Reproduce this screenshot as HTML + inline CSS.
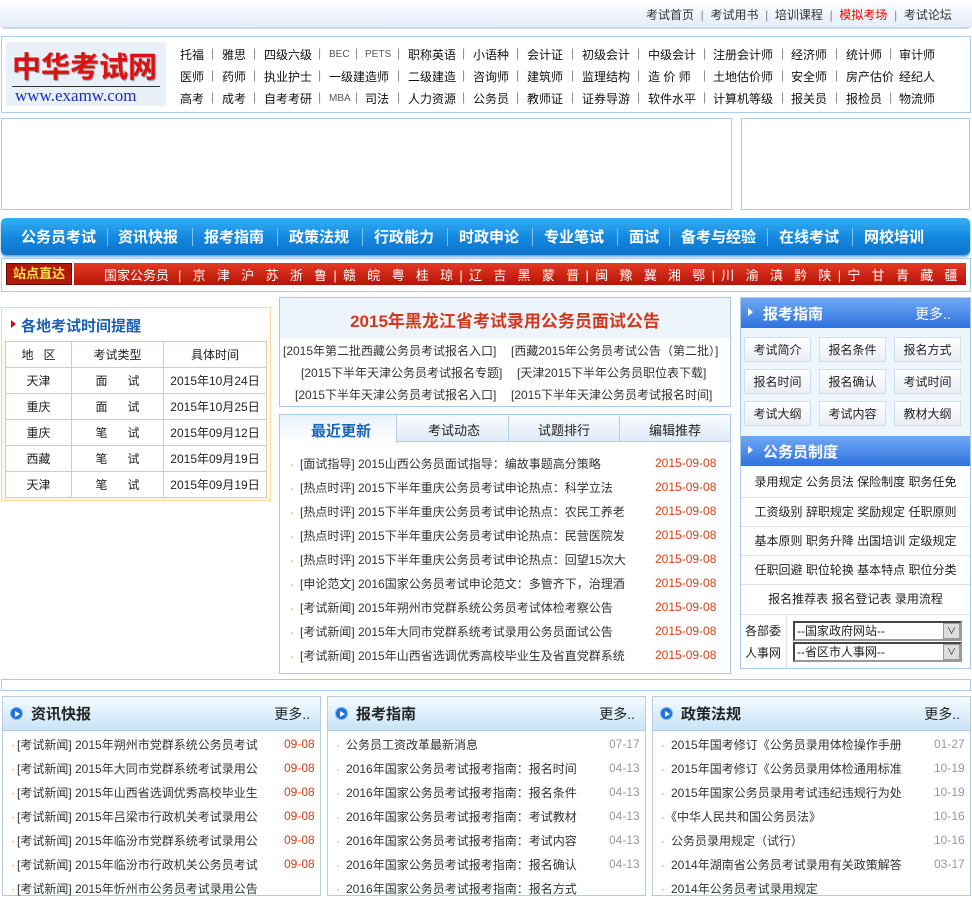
<!DOCTYPE html>
<html><head><meta charset="utf-8">
<style>
*{margin:0;padding:0;box-sizing:border-box}
body{width:972px;height:884px;overflow:hidden;background:#fff;font-family:"Liberation Sans","Noto Sans CJK SC","WenQuanYi Zen Hei",sans-serif;font-size:12px;color:#222;position:relative}
.a{position:absolute;white-space:nowrap}
.sep{color:#888}
.top{left:0;top:0;width:972px;height:29px;background:linear-gradient(#fff,#e4edfb);border-bottom:2px solid #c9d8ef;border-radius:0 0 6px 6px}
.box{position:absolute;border:1px solid #a9cbef}
.hl{font-size:12px;color:#111}
.nav{left:1px;top:218px;width:969px;height:37px;border-radius:5px;background:linear-gradient(#33b0f6,#1386de 55%,#0f74cc);box-shadow:0 2px 2px #6aa3d6}
.nav span{position:absolute;top:8px;color:#fff;font-size:15px;font-weight:bold}
.nav i{position:absolute;top:10px;width:1px;height:18px;background:#7cc6f5}
.red{left:74px;top:263px;width:892px;height:22px;background:linear-gradient(#e33a22,#b8130a)}
.red span{position:absolute;top:2px;color:#fff;font-size:13px}
.tb{border-collapse:collapse;position:absolute;left:5px;top:341px;width:262px}
.tb td{border:1px solid #ccc;height:26px;text-align:center;font-size:12px}
.li{position:absolute;font-size:12px;color:#333;white-space:nowrap}
.dot{color:#f08a00;margin-right:6px}
.dt{position:absolute;color:#d2401a;font-size:12px}
.gr{position:absolute;color:#999;font-size:12px}
.btn{position:absolute;width:67px;height:25px;background:linear-gradient(#fff,#e9eef5);border:1px solid #d4dde8;text-align:center;line-height:24px;font-size:12px;color:#222}
.rhd{position:absolute;height:30px;background:linear-gradient(#6fa8f3,#2f72e0);color:#fff;font-weight:bold;font-size:15px}
.bh{position:absolute;top:697px;height:34px;background:linear-gradient(#f5fbff,#c9e3f6);border-bottom:1px solid #b7cbe0}
.bh b{position:absolute;left:28px;top:6px;font-size:15px}
.bh em{position:absolute;right:10px;top:7px;font-style:normal;font-size:14px}
.ci{position:absolute;left:7px;top:10px;width:13px;height:13px;border-radius:50%;background:#1d73d6;border:1px solid #7fb6ef}
.ci:after{content:"";position:absolute;left:4px;top:3px;border-left:5px solid #fff;border-top:3px solid transparent;border-bottom:3px solid transparent}
.cell{position:absolute;left:741px;width:229px;height:29px;border-top:1px solid #d8e2ee;text-align:center;line-height:28px;font-size:12px}
.sm{font-size:10px!important;color:#555;line-height:17px}
</style></head><body>
<div class="a top"></div>
<div class="a" style="left:646px;top:6px;font-size:12px;color:#333">考试首页 &nbsp;<span class="sep">|</span>&nbsp; 考试用书 &nbsp;<span class="sep">|</span>&nbsp; 培训课程 &nbsp;<span class="sep">|</span>&nbsp; <span style="color:#e00">模拟考场</span> &nbsp;<span class="sep">|</span>&nbsp; 考试论坛</div>

<div class="box" style="left:1px;top:36px;width:970px;height:77px"></div>
<div class="a" style="left:6px;top:42px;width:160px;height:64px;background:#e9f0f8"></div>
<div class="a" style="left:12px;top:44px;font-size:29px;font-weight:bold;color:#d11;font-family:'Noto Sans CJK SC',sans-serif;text-shadow:1px 1px 1px #888">中华考试网</div>
<div class="a" style="left:12px;top:86px;width:148px;height:1px;background:#333"></div>
<div class="a" style="left:15px;top:86px;font-size:17px;color:#1c2fb8;font-family:'Liberation Serif',serif">www.examw.com</div>

<div class="hl">
<span class="a" style="left:180px;top:46px">托福</span><span class="a sep" style="left:211px;top:46px">|</span>
<span class="a" style="left:222px;top:46px">雅思</span><span class="a sep" style="left:253px;top:46px">|</span>
<span class="a" style="left:264px;top:46px">四级六级</span><span class="a sep" style="left:318px;top:46px">|</span>
<span class="a sm" style="left:329px;top:46px">BEC</span><span class="a sep" style="left:355px;top:46px">|</span>
<span class="a sm" style="left:365px;top:46px">PETS</span><span class="a sep" style="left:397px;top:46px">|</span>
<span class="a" style="left:408px;top:46px">职称英语</span><span class="a sep" style="left:462px;top:46px">|</span>
<span class="a" style="left:473px;top:46px">小语种</span><span class="a sep" style="left:516px;top:46px">|</span>
<span class="a" style="left:527px;top:46px">会计证</span><span class="a sep" style="left:571px;top:46px">|</span>
<span class="a" style="left:582px;top:46px">初级会计</span><span class="a sep" style="left:637px;top:46px">|</span>
<span class="a" style="left:648px;top:46px">中级会计</span><span class="a sep" style="left:703px;top:46px">|</span>
<span class="a" style="left:713px;top:46px">注册会计师</span><span class="a sep" style="left:781px;top:46px">|</span>
<span class="a" style="left:791px;top:46px">经济师</span><span class="a sep" style="left:835px;top:46px">|</span>
<span class="a" style="left:846px;top:46px">统计师</span><span class="a sep" style="left:889px;top:46px">|</span>
<span class="a" style="left:899px;top:46px">审计师</span>

<span class="a" style="left:180px;top:68px">医师</span><span class="a sep" style="left:211px;top:68px">|</span>
<span class="a" style="left:222px;top:68px">药师</span><span class="a sep" style="left:253px;top:68px">|</span>
<span class="a" style="left:264px;top:68px">执业护士</span><span class="a sep" style="left:318px;top:68px">|</span>
<span class="a" style="left:329px;top:68px">一级建造师</span><span class="a sep" style="left:397px;top:68px">|</span>
<span class="a" style="left:408px;top:68px">二级建造</span><span class="a sep" style="left:462px;top:68px">|</span>
<span class="a" style="left:473px;top:68px">咨询师</span><span class="a sep" style="left:516px;top:68px">|</span>
<span class="a" style="left:527px;top:68px">建筑师</span><span class="a sep" style="left:571px;top:68px">|</span>
<span class="a" style="left:582px;top:68px">监理结构</span><span class="a sep" style="left:637px;top:68px">|</span>
<span class="a" style="left:648px;top:68px">造&nbsp;价&nbsp;师</span><span class="a sep" style="left:703px;top:68px">|</span>
<span class="a" style="left:713px;top:68px">土地估价师</span><span class="a sep" style="left:781px;top:68px">|</span>
<span class="a" style="left:791px;top:68px">安全师</span><span class="a sep" style="left:835px;top:68px">|</span>
<span class="a" style="left:846px;top:68px">房产估价</span>
<span class="a" style="left:899px;top:68px">经纪人</span>

<span class="a" style="left:180px;top:90px">高考</span><span class="a sep" style="left:211px;top:90px">|</span>
<span class="a" style="left:222px;top:90px">成考</span><span class="a sep" style="left:253px;top:90px">|</span>
<span class="a" style="left:264px;top:90px">自考考研</span><span class="a sep" style="left:318px;top:90px">|</span>
<span class="a sm" style="left:329px;top:90px">MBA</span><span class="a sep" style="left:355px;top:90px">|</span>
<span class="a" style="left:365px;top:90px">司法</span><span class="a sep" style="left:397px;top:90px">|</span>
<span class="a" style="left:408px;top:90px">人力资源</span><span class="a sep" style="left:462px;top:90px">|</span>
<span class="a" style="left:473px;top:90px">公务员</span><span class="a sep" style="left:516px;top:90px">|</span>
<span class="a" style="left:527px;top:90px">教师证</span><span class="a sep" style="left:571px;top:90px">|</span>
<span class="a" style="left:582px;top:90px">证券导游</span><span class="a sep" style="left:637px;top:90px">|</span>
<span class="a" style="left:648px;top:90px">软件水平</span><span class="a sep" style="left:703px;top:90px">|</span>
<span class="a" style="left:713px;top:90px">计算机等级</span><span class="a sep" style="left:781px;top:90px">|</span>
<span class="a" style="left:791px;top:90px">报关员</span><span class="a sep" style="left:835px;top:90px">|</span>
<span class="a" style="left:846px;top:90px">报检员</span><span class="a sep" style="left:889px;top:90px">|</span>
<span class="a" style="left:899px;top:90px">物流师</span>
</div>

<div class="box" style="left:1px;top:118px;width:731px;height:92px"></div>
<div class="box" style="left:741px;top:118px;width:229px;height:92px"></div>

<div class="a nav">
<span style="left:20px">公务员考试</span><i style="left:106px"></i>
<span style="left:117px">资讯快报</span><i style="left:191px"></i>
<span style="left:203px">报考指南</span><i style="left:276px"></i>
<span style="left:288px">政策法规</span><i style="left:361px"></i>
<span style="left:373px">行政能力</span><i style="left:446px"></i>
<span style="left:458px">时政申论</span><i style="left:531px"></i>
<span style="left:543px">专业笔试</span><i style="left:616px"></i>
<span style="left:628px">面试</span><i style="left:668px"></i>
<span style="left:680px">备考与经验</span><i style="left:766px"></i>
<span style="left:778px">在线考试</span><i style="left:851px"></i>
<span style="left:863px">网校培训</span>
</div>

<div class="box" style="left:1px;top:258px;width:970px;height:34px"></div>
<div class="a" style="left:6px;top:263px;width:66px;height:22px;background:#b3180d;border:1px solid #6a0b05;color:#ffe04a;font-weight:bold;font-size:13px;text-align:center;line-height:20px">站点直达</div>
<div class="a red">
<span style="left:30px">国家公务员</span>
<span style="left:104px;letter-spacing:1.35px">|&nbsp; 京&nbsp; 津&nbsp; 沪&nbsp; 苏&nbsp; 浙&nbsp; 鲁&nbsp;|&nbsp;赣&nbsp; 皖&nbsp; 粤&nbsp; 桂&nbsp; 琼&nbsp;|&nbsp;辽&nbsp; 吉&nbsp; 黑&nbsp; 蒙&nbsp; 晋&nbsp;|&nbsp;闽&nbsp; 豫&nbsp; 冀&nbsp; 湘&nbsp; 鄂&nbsp;|&nbsp;川&nbsp; 渝&nbsp; 滇&nbsp; 黔&nbsp; 陕&nbsp;|&nbsp;宁&nbsp; 甘&nbsp; 青&nbsp; 藏&nbsp; 疆</span>
</div>

<!-- left -->
<div class="a" style="left:1px;top:307px;width:270px;height:194px;border:1px solid #f5d89a;background:#fff8e6"></div>
<div class="a" style="left:2px;top:308px;width:268px;height:32px;background:#fff"></div>
<div class="a" style="left:11px;top:320px;border-left:5px solid #c11;border-top:4px solid transparent;border-bottom:4px solid transparent"></div>
<div class="a" style="left:21px;top:315px;font-size:15px;font-weight:bold;color:#1b5fb6">各地考试时间提醒</div>
<table class="tb" style="background:#fff">
<tr><td style="width:66px">地&nbsp;&nbsp;&nbsp;区</td><td style="width:92px">考试类型</td><td>具体时间</td></tr>
<tr><td>天津</td><td>面&nbsp;&nbsp;&nbsp;&nbsp;&nbsp;&nbsp;试</td><td>2015年10月24日</td></tr>
<tr><td>重庆</td><td>面&nbsp;&nbsp;&nbsp;&nbsp;&nbsp;&nbsp;试</td><td>2015年10月25日</td></tr>
<tr><td>重庆</td><td>笔&nbsp;&nbsp;&nbsp;&nbsp;&nbsp;&nbsp;试</td><td>2015年09月12日</td></tr>
<tr><td>西藏</td><td>笔&nbsp;&nbsp;&nbsp;&nbsp;&nbsp;&nbsp;试</td><td>2015年09月19日</td></tr>
<tr><td>天津</td><td>笔&nbsp;&nbsp;&nbsp;&nbsp;&nbsp;&nbsp;试</td><td>2015年09月19日</td></tr>
</table>

<!-- center -->
<div class="box" style="left:279px;top:297px;width:452px;height:110px"></div>
<div class="a" style="left:280px;top:298px;width:450px;height:40px;background:#eef4fc"></div>
<div class="a" style="left:279px;top:307px;width:452px;text-align:center;font-size:17px;font-weight:bold;color:#d3381c">2015年黑龙江省考试录用公务员面试公告</div>
<div class="a" style="left:283px;top:342px;color:#333">[2015年第二批西藏公务员考试报名入口]</div>
<div class="a" style="left:511px;top:342px;color:#333">[西藏2015年公务员考试公告（第二批）]</div>
<div class="a" style="left:301px;top:364px;color:#333">[2015下半年天津公务员考试报名专题]</div>
<div class="a" style="left:517px;top:364px;color:#333">[天津2015下半年公务员职位表下载]</div>
<div class="a" style="left:295px;top:386px;color:#333">[2015下半年天津公务员考试报名入口]</div>
<div class="a" style="left:511px;top:386px;color:#333">[2015下半年天津公务员考试报名时间]</div>

<div class="box" style="left:279px;top:414px;width:452px;height:260px"></div>
<div class="a" style="left:280px;top:415px;width:450px;height:27px;background:linear-gradient(#fafcff,#dfeaf7);border-bottom:1px solid #b9cfe8"></div>
<div class="a" style="left:280px;top:415px;width:117px;height:28px;background:linear-gradient(#e8f1fb,#fff);border-right:1px solid #b9cfe8"></div>
<div class="a" style="left:311px;top:420px;font-size:15px;font-weight:bold;color:#1b64b8">最近更新</div>
<div class="a" style="left:508px;top:416px;width:1px;height:26px;background:#b9cfe8"></div>
<div class="a" style="left:619px;top:416px;width:1px;height:26px;background:#b9cfe8"></div>
<div class="a" style="left:428px;top:420px;font-size:13px">考试动态</div>
<div class="a" style="left:538px;top:420px;font-size:13px">试题排行</div>
<div class="a" style="left:649px;top:420px;font-size:13px">编辑推荐</div>

<div class="li" style="left:290px;top:455px"><span class="dot">·</span>[面试指导] 2015山西公务员面试指导：编故事题高分策略</div>
<div class="li" style="left:290px;top:479px"><span class="dot">·</span>[热点时评] 2015下半年重庆公务员考试申论热点：科学立法</div>
<div class="li" style="left:290px;top:503px"><span class="dot">·</span>[热点时评] 2015下半年重庆公务员考试申论热点：农民工养老</div>
<div class="li" style="left:290px;top:527px"><span class="dot">·</span>[热点时评] 2015下半年重庆公务员考试申论热点：民营医院发</div>
<div class="li" style="left:290px;top:551px"><span class="dot">·</span>[热点时评] 2015下半年重庆公务员考试申论热点：回望15次大</div>
<div class="li" style="left:290px;top:575px"><span class="dot">·</span>[申论范文] 2016国家公务员考试申论范文：多管齐下，治理酒</div>
<div class="li" style="left:290px;top:599px"><span class="dot">·</span>[考试新闻] 2015年朔州市党群系统公务员考试体检考察公告</div>
<div class="li" style="left:290px;top:623px"><span class="dot">·</span>[考试新闻] 2015年大同市党群系统考试录用公务员面试公告</div>
<div class="li" style="left:290px;top:647px"><span class="dot">·</span>[考试新闻] 2015年山西省选调优秀高校毕业生及省直党群系统</div>
<div class="dt" style="left:655px;top:456px">2015-09-08</div>
<div class="dt" style="left:655px;top:480px">2015-09-08</div>
<div class="dt" style="left:655px;top:504px">2015-09-08</div>
<div class="dt" style="left:655px;top:528px">2015-09-08</div>
<div class="dt" style="left:655px;top:552px">2015-09-08</div>
<div class="dt" style="left:655px;top:576px">2015-09-08</div>
<div class="dt" style="left:655px;top:600px">2015-09-08</div>
<div class="dt" style="left:655px;top:624px">2015-09-08</div>
<div class="dt" style="left:655px;top:648px">2015-09-08</div>

<!-- right -->
<div class="box" style="left:740px;top:297px;width:231px;height:372px;background:#eef6fd"></div>
<div class="rhd" style="left:741px;top:298px;width:229px"></div>
<div class="a" style="left:748px;top:308px;border-left:5px solid #fff;border-top:4px solid transparent;border-bottom:4px solid transparent"></div>
<div class="a" style="left:763px;top:303px;color:#fff;font-size:15px;font-weight:bold">报考指南</div>
<div class="a" style="left:915px;top:304px;color:#fff;font-size:14px">更多..</div>
<div class="btn" style="left:744px;top:337px">考试简介</div>
<div class="btn" style="left:819px;top:337px">报名条件</div>
<div class="btn" style="left:894px;top:337px">报名方式</div>
<div class="btn" style="left:744px;top:369px">报名时间</div>
<div class="btn" style="left:819px;top:369px">报名确认</div>
<div class="btn" style="left:894px;top:369px">考试时间</div>
<div class="btn" style="left:744px;top:401px">考试大纲</div>
<div class="btn" style="left:819px;top:401px">考试内容</div>
<div class="btn" style="left:894px;top:401px">教材大纲</div>
<div class="rhd" style="left:741px;top:436px;width:229px"></div>
<div class="a" style="left:748px;top:446px;border-left:5px solid #fff;border-top:4px solid transparent;border-bottom:4px solid transparent"></div>
<div class="a" style="left:763px;top:441px;color:#fff;font-size:15px;font-weight:bold">公务员制度</div>
<div class="a" style="left:741px;top:467px;width:229px;height:201px;background:#fff"></div>
<div class="cell" style="top:468px;border-top:none">录用规定 公务员法 保险制度 职务任免</div>
<div class="cell" style="top:497px">工资级别 辞职规定 奖励规定 任职原则</div>
<div class="cell" style="top:526px">基本原则 职务升降 出国培训 定级规定</div>
<div class="cell" style="top:555px">任职回避 职位轮换 基本特点 职位分类</div>
<div class="cell" style="top:584px">报名推荐表 报名登记表 录用流程</div>
<div class="a" style="left:741px;top:614px;width:229px;height:1px;background:#d8e2ee"></div>
<div class="a" style="left:786px;top:615px;width:1px;height:53px;background:#d8e2ee"></div>
<div class="a" style="left:745px;top:622px;font-size:12px">各部委</div>
<div class="a" style="left:745px;top:644px;font-size:12px">人事网</div>
<div class="a" style="left:793px;top:621px;width:169px;height:20px;border:2px inset #999;background:#fff;font-size:12px;padding-left:2px;line-height:16px">--国家政府网站--</div>
<div class="a" style="left:943px;top:623px;width:17px;height:16px;background:#ddd;border:1px solid #999;text-align:center;font-size:9px;line-height:14px">∨</div>
<div class="a" style="left:793px;top:642px;width:169px;height:20px;border:2px inset #999;background:#fff;font-size:12px;padding-left:2px;line-height:16px">--省区市人事网--</div>
<div class="a" style="left:943px;top:644px;width:17px;height:16px;background:#ddd;border:1px solid #999;text-align:center;font-size:9px;line-height:14px">∨</div>

<div class="box" style="left:1px;top:679px;width:970px;height:12px"></div>

<!-- bottom columns -->
<div class="a" style="left:2px;top:696px;width:319px;height:200px;border:1px solid #b7cbe0"></div>
<div class="a" style="left:327px;top:696px;width:319px;height:200px;border:1px solid #b7cbe0"></div>
<div class="a" style="left:652px;top:696px;width:319px;height:200px;border:1px solid #b7cbe0"></div>
<div class="bh" style="left:3px;width:317px"><span class="ci"></span><b>资讯快报</b><em>更多..</em></div>
<div class="bh" style="left:328px;width:317px"><span class="ci"></span><b>报考指南</b><em>更多..</em></div>
<div class="bh" style="left:653px;width:317px"><span class="ci"></span><b>政策法规</b><em>更多..</em></div>

<div class="li" style="left:11px;top:736px"><span class="dot" style="margin-right:2px">·</span>[考试新闻] 2015年朔州市党群系统公务员考试</div>
<div class="li" style="left:11px;top:760px"><span class="dot" style="margin-right:2px">·</span>[考试新闻] 2015年大同市党群系统考试录用公</div>
<div class="li" style="left:11px;top:784px"><span class="dot" style="margin-right:2px">·</span>[考试新闻] 2015年山西省选调优秀高校毕业生</div>
<div class="li" style="left:11px;top:808px"><span class="dot" style="margin-right:2px">·</span>[考试新闻] 2015年吕梁市行政机关考试录用公</div>
<div class="li" style="left:11px;top:832px"><span class="dot" style="margin-right:2px">·</span>[考试新闻] 2015年临汾市党群系统考试录用公</div>
<div class="li" style="left:11px;top:856px"><span class="dot" style="margin-right:2px">·</span>[考试新闻] 2015年临汾市行政机关公务员考试</div>
<div class="li" style="left:11px;top:880px"><span class="dot" style="margin-right:2px">·</span>[考试新闻] 2015年忻州市公务员考试录用公告</div>
<div class="dt" style="left:284px;top:737px">09-08</div><div class="dt" style="left:284px;top:761px">09-08</div><div class="dt" style="left:284px;top:785px">09-08</div><div class="dt" style="left:284px;top:809px">09-08</div><div class="dt" style="left:284px;top:833px">09-08</div><div class="dt" style="left:284px;top:857px">09-08</div>

<div class="li" style="left:336px;top:736px"><span class="dot">·</span>公务员工资改革最新消息</div>
<div class="li" style="left:336px;top:760px"><span class="dot">·</span>2016年国家公务员考试报考指南：报名时间</div>
<div class="li" style="left:336px;top:784px"><span class="dot">·</span>2016年国家公务员考试报考指南：报名条件</div>
<div class="li" style="left:336px;top:808px"><span class="dot">·</span>2016年国家公务员考试报考指南：考试教材</div>
<div class="li" style="left:336px;top:832px"><span class="dot">·</span>2016年国家公务员考试报考指南：考试内容</div>
<div class="li" style="left:336px;top:856px"><span class="dot">·</span>2016年国家公务员考试报考指南：报名确认</div>
<div class="li" style="left:336px;top:880px"><span class="dot">·</span>2016年国家公务员考试报考指南：报名方式</div>
<div class="gr" style="left:609px;top:737px">07-17</div><div class="gr" style="left:609px;top:761px">04-13</div><div class="gr" style="left:609px;top:785px">04-13</div><div class="gr" style="left:609px;top:809px">04-13</div><div class="gr" style="left:609px;top:833px">04-13</div><div class="gr" style="left:609px;top:857px">04-13</div>

<div class="li" style="left:661px;top:736px"><span class="dot">·</span>2015年国考修订《公务员录用体检操作手册</div>
<div class="li" style="left:661px;top:760px"><span class="dot">·</span>2015年国考修订《公务员录用体检通用标准</div>
<div class="li" style="left:661px;top:784px"><span class="dot">·</span>2015年国家公务员录用考试违纪违规行为处</div>
<div class="li" style="left:661px;top:808px"><span class="dot">·</span>《中华人民共和国公务员法》</div>
<div class="li" style="left:661px;top:832px"><span class="dot">·</span>公务员录用规定（试行）</div>
<div class="li" style="left:661px;top:856px"><span class="dot">·</span>2014年湖南省公务员考试录用有关政策解答</div>
<div class="li" style="left:661px;top:880px"><span class="dot">·</span>2014年公务员考试录用规定</div>
<div class="gr" style="left:934px;top:737px">01-27</div><div class="gr" style="left:934px;top:761px">10-19</div><div class="gr" style="left:934px;top:785px">10-19</div><div class="gr" style="left:934px;top:809px">10-16</div><div class="gr" style="left:934px;top:833px">10-16</div><div class="gr" style="left:934px;top:857px">03-17</div>
</body></html>
